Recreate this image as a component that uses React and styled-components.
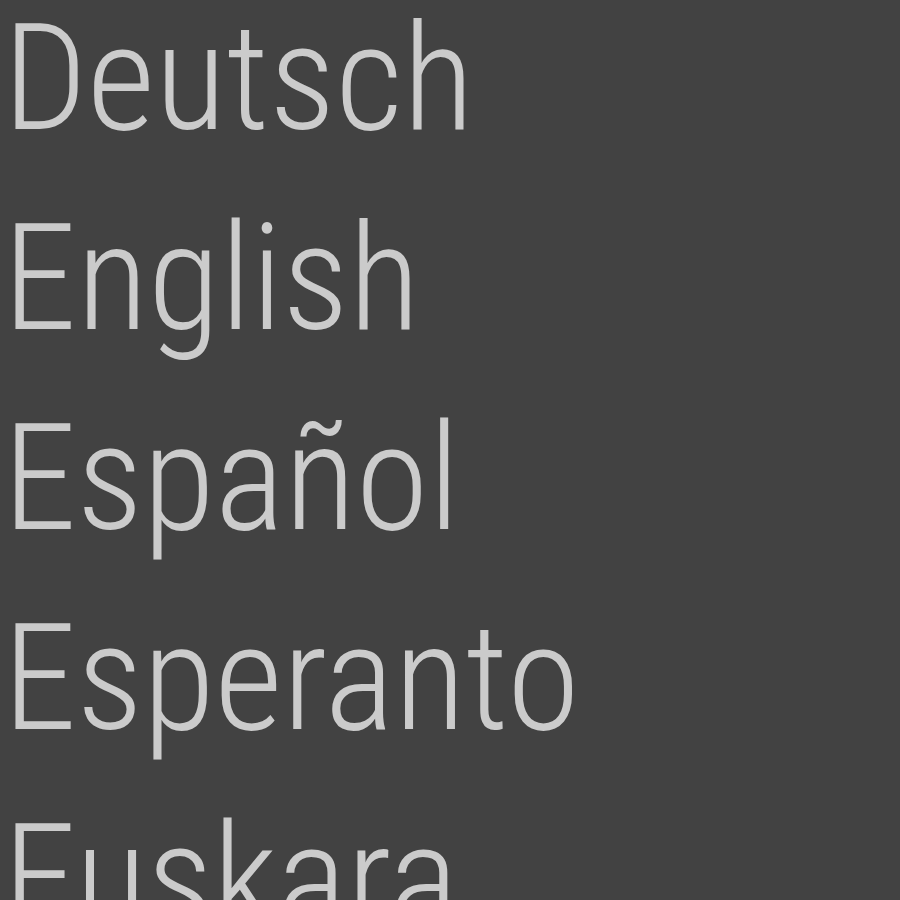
import React from "react";
import styled, { createGlobalStyle } from "styled-components";

const Global = createGlobalStyle`
  html, body { margin: 0; padding: 0; background: #424242; }
  body { overflow: hidden; }
`;

const List = styled.ul`
  list-style: none;
  margin: 0;
  padding: 0 0 0 3px;
  height: 900px;
  overflow: hidden;
  background: #424242;
`;

const Item = styled.li`
  font-family: "Roboto Condensed", Roboto, sans-serif;
  font-stretch: 75%;
  font-weight: 300;
  font-size: 148px;
  line-height: 200px;
  color: #cbcbcb;
  white-space: nowrap;
  margin-top: ${(p) => (p.$first ? "-21px" : "0")};
`;

const languages = ["Deutsch", "English", "Español", "Esperanto", "Euskara"];

export default function App() {
  return (
    <>
      <Global />
      <List>
        {languages.map((l, i) => (
          <Item key={l} $first={i === 0}>{l}</Item>
        ))}
      </List>
    </>
  );
}
